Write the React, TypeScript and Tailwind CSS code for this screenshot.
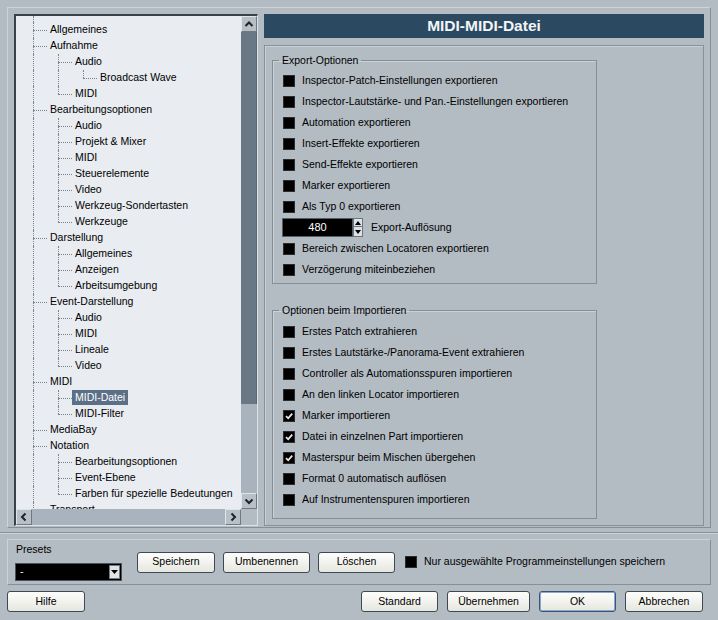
import React from "react";

type Item = { label: string; level: number; selected?: boolean };

const items: Item[] = [
  { label: "Allgemeines", level: 0 },
  { label: "Aufnahme", level: 0 },
  { label: "Audio", level: 1 },
  { label: "Broadcast Wave", level: 2 },
  { label: "MIDI", level: 1 },
  { label: "Bearbeitungsoptionen", level: 0 },
  { label: "Audio", level: 1 },
  { label: "Projekt & Mixer", level: 1 },
  { label: "MIDI", level: 1 },
  { label: "Steuerelemente", level: 1 },
  { label: "Video", level: 1 },
  { label: "Werkzeug-Sondertasten", level: 1 },
  { label: "Werkzeuge", level: 1 },
  { label: "Darstellung", level: 0 },
  { label: "Allgemeines", level: 1 },
  { label: "Anzeigen", level: 1 },
  { label: "Arbeitsumgebung", level: 1 },
  { label: "Event-Darstellung", level: 0 },
  { label: "Audio", level: 1 },
  { label: "MIDI", level: 1 },
  { label: "Lineale", level: 1 },
  { label: "Video", level: 1 },
  { label: "MIDI", level: 0 },
  { label: "MIDI-Datei", level: 1, selected: true },
  { label: "MIDI-Filter", level: 1 },
  { label: "MediaBay", level: 0 },
  { label: "Notation", level: 0 },
  { label: "Bearbeitungsoptionen", level: 1 },
  { label: "Event-Ebene", level: 1 },
  { label: "Farben für spezielle Bedeutungen", level: 1 },
  { label: "Transport", level: 0 },
];

// tree continues below the visible part, so end with a virtual root-level item
const ext = [...items, { label: "", level: 0 }];

function nextAtOrAbove(i: number, k: number) {
  for (let j = i + 1; j < ext.length; j++) if (ext[j].level <= k) return ext[j].level;
  return -1;
}

const rows = items.map((it, i) => {
  const guides: boolean[] = [];
  for (let k = 0; k < it.level; k++) guides.push(nextAtOrAbove(i, k) === k);
  const last = nextAtOrAbove(i, it.level) < it.level;
  return { ...it, guides, last };
});

const exportOpts = [
  "Inspector-Patch-Einstellungen exportieren",
  "Inspector-Lautstärke- und Pan.-Einstellungen exportieren",
  "Automation exportieren",
  "Insert-Effekte exportieren",
  "Send-Effekte exportieren",
  "Marker exportieren",
  "Als Typ 0 exportieren",
];

const importOpts: [string, boolean][] = [
  ["Erstes Patch extrahieren", false],
  ["Erstes Lautstärke-/Panorama-Event extrahieren", false],
  ["Controller als Automationsspuren importieren", false],
  ["An den linken Locator importieren", false],
  ["Marker importieren", true],
  ["Datei in einzelnen Part importieren", true],
  ["Masterspur beim Mischen übergehen", true],
  ["Format 0 automatisch auflösen", false],
  ["Auf Instrumentenspuren importieren", false],
];

function Check({ on }: { on?: boolean }) {
  return (
    <span className="w-[12px] h-[12px] bg-black border border-[#2c2c2c] flex items-center justify-center shrink-0">
      {on && (
        <svg width="10" height="10" viewBox="0 0 10 10">
          <path d="M2 5.2 L4.2 7.3 L8.2 2.6" fill="none" stroke="#e8eaec" strokeWidth="1.8" />
        </svg>
      )}
    </span>
  );
}

function CheckRow({ label, on }: { label: string; on?: boolean }) {
  return (
    <div className="h-[21px] flex items-center pl-[10px] gap-[7px]">
      <Check on={on} />
      <span>{label}</span>
    </div>
  );
}

function Arrow({ dir }: { dir: "up" | "down" | "left" | "right" }) {
  const d = {
    up: "M3.5 9 L7 5.5 L10.5 9",
    down: "M3.5 5.5 L7 9 L10.5 5.5",
    left: "M8.5 3.5 L5 7 L8.5 10.5",
    right: "M5.5 3.5 L9 7 L5.5 10.5",
  }[dir];
  return (
    <svg width="14" height="14" viewBox="0 0 14 14">
      <path d={d} fill="none" stroke="#1d242b" strokeWidth="2" />
    </svg>
  );
}

function ScrollBtn({ dir }: { dir: "up" | "down" | "left" | "right" }) {
  return (
    <div className="w-[16px] h-[16px] bg-[#b7bfc7] border border-t-[#dfe4e8] border-l-[#dfe4e8] border-r-[#6f7983] border-b-[#6f7983] flex items-center justify-center shrink-0">
      <Arrow dir={dir} />
    </div>
  );
}

function Btn({ children, w, def }: { children: React.ReactNode; w: string; def?: boolean }) {
  return (
    <button
      className={
        "h-[21px] rounded-[3px] border bg-gradient-to-b from-[#fdfdfb] to-[#e7e7e1] text-black flex items-center justify-center " +
        w +
        (def ? " border-[#35557c] shadow-[inset_0_0_0_1px_#8fa8c8]" : " border-[#3e4953]")
      }
    >
      {children}
    </button>
  );
}

function Tree() {
  return (
    <div className="w-[244px] h-[512px] border-t-2 border-l-2 border-t-[#39414a] border-l-[#39414a] border-r border-b border-r-[#dde2e7] border-b-[#dde2e7] flex flex-col shrink-0">
      <div className="flex h-[493px]">
        <div className="w-[225px] bg-[#e9ecf1] overflow-hidden">
          <div className="h-[6px] ml-[17px] border-l border-dotted border-[#7a828b]" />
          {rows.map((r, i) => (
            <div key={i} className="h-[16px] flex whitespace-nowrap">
              {r.guides.map((g, k) => (
                <div key={k} className="w-[25px] h-full shrink-0">
                  {g && <div className="ml-[17px] h-full border-l border-dotted border-[#7a828b]" />}
                </div>
              ))}
              <div className="w-[31px] h-full shrink-0 relative">
                <div
                  className={
                    "absolute left-[17px] top-0 border-l border-dotted border-[#7a828b] " +
                    (r.last ? "h-[8px]" : "h-full")
                  }
                />
                <div className="absolute left-[17px] top-[8px] w-[14px] border-t border-dotted border-[#7a828b]" />
              </div>
              <span
                className={
                  "px-[3px] h-[15px] leading-[15px] " +
                  (r.selected ? "bg-[#5b6f86] text-white" : "text-black")
                }
              >
                {r.label}
              </span>
            </div>
          ))}
        </div>
        <div className="w-[16px] flex flex-col bg-[#a9b3bd]">
          <ScrollBtn dir="up" />
          <div className="h-[372px] bg-[#6a7886] border-r border-[#5b6874]" />
          <div className="flex-1" />
          <ScrollBtn dir="down" />
        </div>
      </div>
      <div className="flex h-[16px]">
        <div className="w-[225px] flex bg-[#a9b3bd]">
          <ScrollBtn dir="left" />
          <div className="flex-1" />
          <ScrollBtn dir="right" />
        </div>
        <div className="w-[16px] bg-[#b3bbc3]" />
      </div>
    </div>
  );
}

export default function App() {
  return (
    <div className="w-[718px] h-[620px] bg-[#b3bbc3] text-[10.5px] text-black font-['Liberation_Sans',Arial,sans-serif] overflow-hidden flex flex-col">
      <div className="ml-[7px] mt-[7px] w-[704px] h-[521px] border border-t-[#cdd3d9] border-l-[#cdd3d9] border-r-[#858f99] border-b-[#858f99] pt-[6px] px-[6px] pb-[1px] flex gap-[6px]">
        <Tree />
        <div className="w-[440px] flex flex-col gap-[7px]">
          <div className="h-[24px] bg-[#2b4a62] text-[#f2f5f7] font-bold text-[15.5px] flex items-center justify-center">
            MIDI-MIDI-Datei
          </div>
          <div className="h-[481px] border border-[#87919b] shadow-[inset_1px_1px_0_#c9d0d6] pl-[7px] pt-[8px]">
            <fieldset className="w-[325px] border border-[#848e98] shadow-[inset_1px_1px_0_#cad1d7] pt-[4px] pb-[3px]">
              <legend className="ml-[6px] px-[3px] leading-[12px]">Export-Optionen</legend>
              {exportOpts.map((o) => (
                <CheckRow key={o} label={o} />
              ))}
              <div className="h-[21px] flex items-center pl-[9px] gap-[8px]">
                <div className="flex h-[19px]">
                  <div className="w-[71px] h-[19px] bg-black border border-[#555d65] text-white flex items-center justify-center text-[11px]">
                    480
                  </div>
                  <div className="w-[10px] flex flex-col">
                    <div className="h-[9px] bg-[#dfe2e5] border border-[#6c757e] flex items-center justify-center">
                      <svg width="6" height="4" viewBox="0 0 6 4">
                        <path d="M0 4 L3 0 L6 4 Z" fill="#000" />
                      </svg>
                    </div>
                    <div className="h-[10px] bg-[#dfe2e5] border border-t-0 border-[#6c757e] flex items-center justify-center">
                      <svg width="6" height="4" viewBox="0 0 6 4">
                        <path d="M0 0 L3 4 L6 0 Z" fill="#000" />
                      </svg>
                    </div>
                  </div>
                </div>
                <span>Export-Auflösung</span>
              </div>
              <CheckRow label="Bereich zwischen Locatoren exportieren" />
              <CheckRow label="Verzögerung miteinbeziehen" />
            </fieldset>
            <fieldset className="mt-[20px] w-[325px] border border-[#848e98] shadow-[inset_1px_1px_0_#cad1d7] pt-[5px] pb-[8px]">
              <legend className="ml-[6px] px-[3px] leading-[12px]">Optionen beim Importieren</legend>
              {importOpts.map(([o, on]) => (
                <CheckRow key={o} label={o} on={on} />
              ))}
            </fieldset>
          </div>
        </div>
      </div>

      <div className="mt-[4px] h-[2px] border-t border-[#87919b] border-b border-b-[#cdd3d9]" />

      <div className="ml-[7px] mt-[5px] w-[704px] h-[46px] border border-t-[#cdd3d9] border-l-[#cdd3d9] border-r-[#858f99] border-b-[#858f99] flex items-center">
        <div className="ml-[7px] w-[107px] flex flex-col gap-[8px]">
          <span className="pl-[1px] leading-[12px]">Presets</span>
          <div className="h-[18px] bg-black border border-[#4a525a] flex items-center justify-between">
            <span className="text-white pl-[4px]">-</span>
            <div className="w-[11px] h-[14px] mr-[1px] bg-[#e0e3e6] border border-[#707982] flex items-center justify-center">
              <svg width="7" height="4" viewBox="0 0 7 4">
                <path d="M0 0 L3.5 4 L7 0 Z" fill="#000" />
              </svg>
            </div>
          </div>
        </div>
        <div className="ml-[15px] flex items-center gap-[8px]">
          <Btn w="w-[78px]">Speichern</Btn>
          <Btn w="w-[87px]">Umbenennen</Btn>
          <Btn w="w-[77px]">Löschen</Btn>
        </div>
        <div className="ml-[10px] flex items-center gap-[7px]">
          <Check />
          <span>Nur ausgewählte Programmeinstellungen speichern</span>
        </div>
      </div>

      <div className="mt-[6px] px-[7px] flex items-center">
        <Btn w="w-[78px]">Hilfe</Btn>
        <div className="ml-auto mr-[8px] flex items-center gap-[9px]">
          <Btn w="w-[77px]">Standard</Btn>
          <Btn w="w-[83px]">Übernehmen</Btn>
          <Btn w="w-[77px]" def>
            OK
          </Btn>
          <Btn w="w-[78px]">Abbrechen</Btn>
        </div>
      </div>
    </div>
  );
}
